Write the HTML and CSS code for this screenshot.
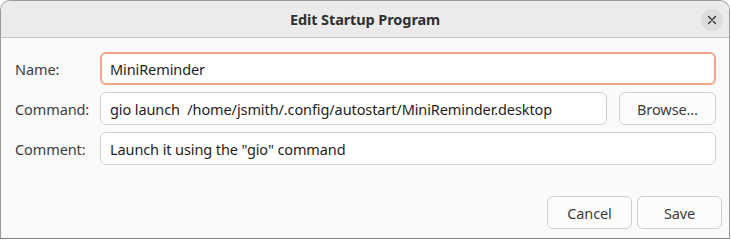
FILE: index.html
```html
<!DOCTYPE html>
<html lang="en">
<head>
  <meta charset="UTF-8" />
  <title>Edit Startup Program</title>
  <link rel="stylesheet" href="styles.css">
</head>
<body>
  <div class="window">
    <!-- Title bar -->
    <div class="titlebar">
      <div class="title">Edit Startup Program</div>
      <button class="close-btn" aria-label="Close">
        <svg width="10" height="10" viewBox="0 0 10 10">
          <path d="M1.5 1.5 L8.5 8.5 M8.5 1.5 L1.5 8.5" stroke="#2e2e2e" stroke-width="1.3" stroke-linecap="round" />
        </svg>
      </button>
    </div>
    <!-- Form -->
    <div class="content">
      <div class="form">
        <label class="label">Name:</label>
        <div class="field focused">MiniReminder</div>
        <label class="label">Command:</label>
        <div class="field-row">
          <div class="field grow">gio launch&nbsp; /home/jsmith/.config/autostart/MiniReminder.desktop</div>
          <button class="btn browse">Browse…</button>
        </div>
        <label class="label">Comment:</label>
        <div class="field">Launch it using the "gio" command</div>
      </div>
    </div>
    <!-- Bottom buttons -->
    <div class="actions">
      <button class="btn">Cancel</button>
      <button class="btn">Save</button>
    </div>
  </div>
</body>
</html>
```

FILE: styles.css
```css
* {
  margin: 0;
  padding: 0;
  box-sizing: border-box;
}
html, body {
  height: 100%;
}
body {
  font-family: "Noto Sans", "DejaVu Sans", sans-serif;
  font-size: 14.5px;
  letter-spacing: -0.1px;
  color: #3d3d3d;
  background: #ffffff;
  overflow: hidden;
}
.window {
  width: 730px;
  height: 239px;
  display: flex;
  flex-direction: column;
  background: #fafafa;
  border: 1px solid #9a9a9a;
  border-bottom-color: #7f7f7f;
  border-radius: 10px 10px 0 0;
  overflow: hidden;
}
/* Title bar */
.titlebar {
  height: 37px;
  flex-shrink: 0;
  display: flex;
  align-items: center;
  justify-content: center;
  position: relative;
  background: #ebebeb;
  border-bottom: 1px solid #c4c4c4;
}
.title {
  font-weight: 700;
  color: #303030;
}
.close-btn {
  position: absolute;
  right: 6px;
  top: 8px;
  width: 22px;
  height: 22px;
  border: none;
  border-radius: 50%;
  background: #dcdcdc;
  display: flex;
  align-items: center;
  justify-content: center;
}
/* Form */
.content {
  padding: 14px 13px 0 14px;
  flex: 1;
}
.form {
  display: grid;
  grid-template-columns: 85px 1fr;
  row-gap: 7px;
  align-items: center;
}
.label {
  color: #3d3d3d;
}
.field {
  height: 33px;
  display: flex;
  align-items: center;
  padding: 0 9px;
  background: #ffffff;
  border: 1px solid #d0d0d0;
  border-radius: 6px;
  color: #1e1e1e;
  white-space: nowrap;
  overflow: hidden;
}
.field.focused {
  border: 2px solid #f2a488;
  padding: 0 8px;
}
.field-row {
  display: flex;
  gap: 12px;
}
.grow {
  flex: 1;
}
/* Buttons */
.btn {
  height: 33px;
  width: 85px;
  font-family: inherit;
  font-size: inherit;
  letter-spacing: inherit;
  color: #3d3d3d;
  background: #fcfcfc;
  border: 1px solid #cfcfcf;
  border-radius: 6px;
}
.browse {
  width: 97px;
}
.actions {
  display: flex;
  justify-content: flex-end;
  gap: 5px;
  padding: 0 7px 9px 0;
}
```
